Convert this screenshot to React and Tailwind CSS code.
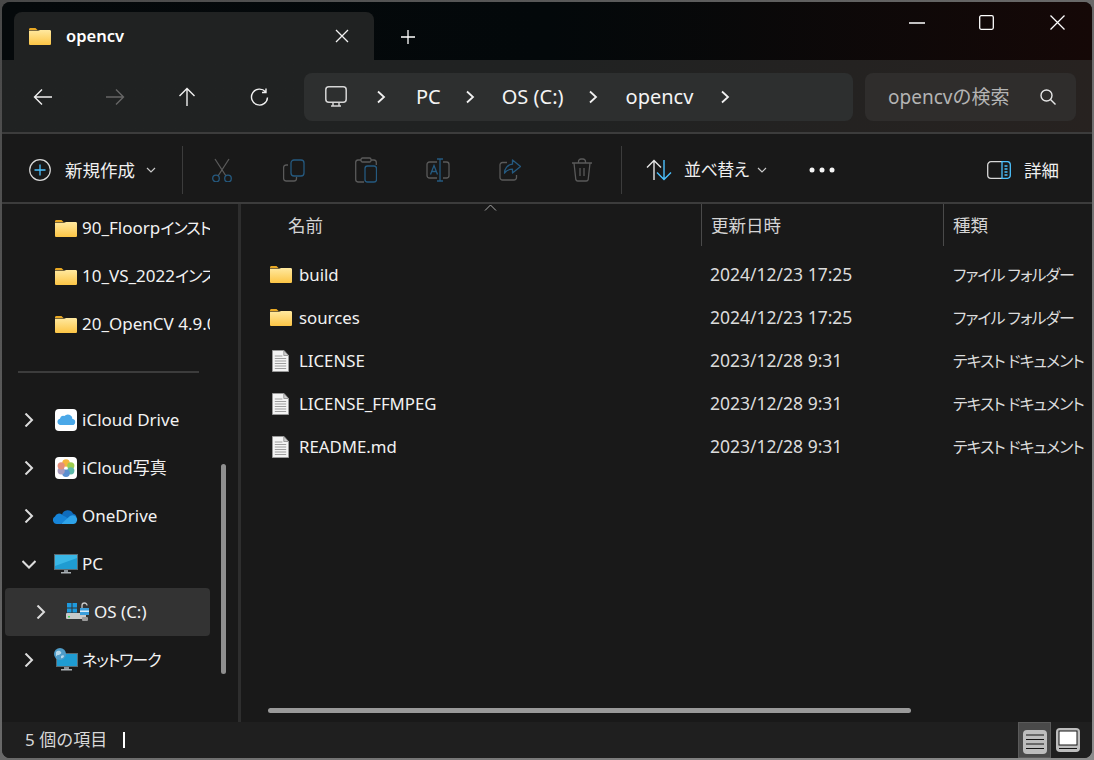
import React from "react";

const font = "font-['Noto_Sans','Noto_Sans_CJK_JP',sans-serif]";
const palt = "[font-feature-settings:'palt']";

const Folder = () => (
  <svg width="22" height="17" viewBox="0 0 23 18" preserveAspectRatio="none" className="shrink-0">
    <defs>
      <linearGradient id="fg" x1="0" y1="0" x2="0" y2="1">
        <stop offset="0" stopColor="#ffe9a0" />
        <stop offset="1" stopColor="#fcc545" />
      </linearGradient>
    </defs>
    <path d="M0 1.500C0 .7.600 0 1.400 0h5.400l2.400 2.400H0z" fill="#e8a824" />
    <path d="M0 3h9.300l2.400-1H21.600c.8 0 1.400.6 1.400 1.400V16.600c0 .8-.6 1.400-1.400 1.400H1.400C.6 18 0 17.400 0 16.600z" fill="url(#fg)" />
  </svg>
);

const Doc = () => (
  <svg width="17" height="22" viewBox="0 0 18 22" preserveAspectRatio="none" className="shrink-0 ml-[2px]">
    <path d="M.5.5h12l5 5v16H.5z" fill="#f4f4f4" stroke="#9a9a9a" />
    <path d="M12.500.5v5h5z" fill="#d0d0d0" stroke="#9a9a9a" />
    <path d="M3 6h8M3 8.500h12M3 11h12M3 13.500h12M3 16h12M3 18.500h12" stroke="#9c9c9c" />
  </svg>
);

const Chevron = ({ down }) => (
  <svg width="14" height="14" viewBox="0 0 14 14" fill="none" stroke="#dcdcdc" strokeWidth="2" className="shrink-0">
    <path d={down ? "M.5 4L7 10.500 13.500 4" : "M3.500.5L10 7l-6.500 6.500"} />
  </svg>
);

const ICloud = () => (
  <svg width="22" height="22" viewBox="0 0 22 22">
    <rect width="22" height="22" rx="4" fill="#fff" />
    <path d="M5.500 16a3.200 3.200 0 01-.6-6.300 3.600 3.600 0 014.500-2.600A4.600 4.600 0 0117.400 10a3 3 0 01-.4 6z" fill="#4aa8e8" />
  </svg>
);

const Photos = () => (
  <svg width="22" height="22" viewBox="0 0 22 22">
    <rect width="22" height="22" rx="4" fill="#fff" />
    <circle cx="11" cy="6" r="3.800" fill="#f5b53d" />
    <circle cx="15.800" cy="8.800" r="3.600" fill="#9ccc4e" />
    <circle cx="15.800" cy="13.800" r="3.600" fill="#5cb8a8" />
    <circle cx="11" cy="16.300" r="3.800" fill="#5a8fd0" />
    <circle cx="6.200" cy="13.800" r="3.600" fill="#a89cc0" />
    <circle cx="6.200" cy="8.800" r="3.600" fill="#e58f7a" />
  </svg>
);

const OneDrive = () => (
  <svg width="25" height="16" viewBox="0 0 25 16">
    <path d="M9 6.500A6 6 0 0120 5.500c1.500.3 3 1.500 3.500 3L14 11z" fill="#0f6cbd" />
    <path d="M2 8.500A4.500 4.500 0 019 6.500L16 11l-8 5H4a4 4 0 01-2-7.500z" fill="#1684d8" />
    <path d="M8 16l9-8c3-1.500 6-.5 7 2.500.5 2.500-1 5.500-3.500 5.500z" fill="#2ea3ea" />
  </svg>
);

const Monitor = () => (
  <svg width="24" height="20" viewBox="0 0 24 20">
    <rect x=".5" y=".5" width="23" height="15" fill="#1f9cd2" stroke="#5a6a72" />
    <path d="M1 1h22v3L1 12z" fill="#3ab7e6" />
    <rect x="10" y="16" width="4" height="2" fill="#8a9298" />
    <rect x="7" y="18" width="10" height="1.500" fill="#aab0b4" />
  </svg>
);

const Drive = () => (
  <svg width="24" height="20" viewBox="0 0 24 20">
    <rect x="1" y="1" width="4.500" height="4.500" fill="#1e9be0" />
    <rect x="6.500" y="1" width="4.500" height="4.500" fill="#1e9be0" />
    <rect x="1" y="6.500" width="4.500" height="4" fill="#1e9be0" />
    <rect x="6.500" y="6.500" width="4.500" height="4" fill="#1e9be0" />
    <rect x="0" y="11" width="20" height="6" rx="1" fill="#c9c9c9" />
    <rect x="2" y="14" width="2" height="1.500" fill="#3fd45a" />
    <path d="M16 6V3.500a2.500 2.500 0 015 0" stroke="#c8c8c8" strokeWidth="1.300" fill="none" />
    <rect x="14" y="6" width="9" height="7" fill="#3a9edc" />
    <rect x="14" y="8.500" width="9" height="1.500" fill="#d8ecf8" />
    <rect x="16" y="15" width="6" height="4" rx="1" fill="#9a9a9a" />
  </svg>
);

const Network = () => (
  <svg width="25" height="24" viewBox="0 0 25 24">
    <rect x="3.500" y="5.500" width="21" height="13" fill="#1f9cd2" stroke="#5a6a72" />
    <rect x="11" y="19" width="5" height="2" fill="#8a9298" />
    <rect x="8" y="21" width="11" height="1.500" fill="#aab0b4" />
    <circle cx="7" cy="6" r="6" fill="#4f9cc8" />
    <path d="M3 4c2-2 4-1 5 0s-1 3-3 3-1 2-2 1zM8 8c1-1 3-1 3 0s-2 3-3 2z" fill="#b5d8ea" />
  </svg>
);

const Kana = ({ children }) => (
  <span className="text-[16px] tracking-[-1px]">{children}</span>
);

const NavRow = ({ icon, label, chevron, down, selected, indent }) => (
  <div
    className={`h-12 ml-[3px] w-[205px] flex items-center overflow-hidden rounded-sm ${selected ? "bg-[#333333]" : ""} ${indent ? "pl-[29px]" : "pl-[17px]"}`}
  >
    <span className="w-[14px] shrink-0 flex justify-center">
      {chevron && <Chevron down={down} />}
    </span>
    <span className="w-[25px] ml-[17px] shrink-0 flex justify-center">{icon}</span>
    <span className={`ml-[4px] text-[17px] text-[#f2f2f2] whitespace-nowrap ${palt}`}>{label}</span>
  </div>
);

const FileRow = ({ icon, name, date, type }) => (
  <div className="h-[43px] flex items-center text-[#f2f2f2] whitespace-nowrap">
    <span className="w-[58px] pl-[29px] flex shrink-0">{icon}</span>
    <span className="w-[411px] shrink-0 text-[16.8px]">{name}</span>
    <span className="w-[243px] shrink-0 text-[#dcdcdc] text-[17.5px]">{date}</span>
    <span className={`text-[#dcdcdc] text-[16px] tracking-[-1px] ${palt}`}>{type}</span>
  </div>
);

const Tool = ({ children }) => (
  <div className="w-[72px] h-full flex items-center justify-center shrink-0">{children}</div>
);

const BreadArrow = () => (
  <svg width="12" height="14" viewBox="0 0 12 14" fill="none" stroke="#f0f0f0" strokeWidth="1.800" className="shrink-0">
    <path d="M3 1.500L9 7l-6 5.500" />
  </svg>
);

const SmallDown = () => (
  <svg width="10" height="7" viewBox="0 0 10 7" fill="none" stroke="#c8c8c8" strokeWidth="1.200">
    <path d="M1 1l4 4 4-4" />
  </svg>
);

export default function App() {
  return (
    <div className={`w-[1094px] h-[760px] overflow-hidden bg-gradient-to-br from-[#484848] to-[#8c8c8c] p-[2px] ${font}`}>
      <div className="w-[1090px] h-[756px] rounded-lg overflow-hidden flex flex-col bg-[#191919]">
        {/* タイトルバー */}
        <div className="h-[58px] shrink-0 flex bg-gradient-to-r from-[#05090b] via-[#03080a] to-[#150807]">
          <div className="ml-[12px] mt-[10px] w-[360px] h-[48px] bg-[#202222] rounded-t-lg flex items-center pl-[15px] shrink-0">
            <Folder />
            <span className="ml-[15px] text-[16.5px] font-semibold text-white">opencv</span>
            <svg width="14" height="14" viewBox="0 0 14 14" stroke="#f2f2f2" strokeWidth="1.300" className="ml-[211px]">
              <path d="M1 1l12 12M13 1L1 13" />
            </svg>
          </div>
          <svg width="16" height="16" viewBox="0 0 16 16" stroke="#fff" strokeWidth="1.300" className="ml-[26px] mt-[27px] shrink-0">
            <path d="M8 1v14M1 8h14" />
          </svg>
          <div className="ml-auto flex h-[30px] items-start">
            <svg width="16" height="2" viewBox="0 0 16 2" stroke="#fff" strokeWidth="1.300" className="mt-[20px]">
              <path d="M0 1h16" />
            </svg>
            <svg width="15" height="15" viewBox="0 0 15 15" fill="none" stroke="#fff" strokeWidth="1.300" className="ml-[54px] mt-[13px]">
              <rect x=".7" y=".7" width="13.600" height="13.600" rx="1.500" />
            </svg>
            <svg width="15" height="15" viewBox="0 0 15 15" stroke="#fff" strokeWidth="1.300" className="ml-[56px] mt-[13px] mr-[27px]">
              <path d="M.5.5l14 14M14.500.5l-14 14" />
            </svg>
          </div>
        </div>

        {/* アドレスバー */}
        <div className="h-[72px] shrink-0 flex items-center pl-[5px] pt-[2px] bg-gradient-to-r from-[#202222] via-[#202222] to-[#272220]">
          <Tool>
            <svg width="20" height="18" viewBox="0 0 20 18" fill="none" stroke="#f0f0f0" strokeWidth="1.400"><path d="M19 9H1.500M9 1.500L1.500 9 9 16.500" /></svg>
          </Tool>
          <Tool>
            <svg width="20" height="18" viewBox="0 0 20 18" fill="none" stroke="#666666" strokeWidth="1.400"><path d="M1 9h17.500M11 1.500L18.500 9 11 16.500" /></svg>
          </Tool>
          <Tool>
            <svg width="18" height="20" viewBox="0 0 18 20" fill="none" stroke="#f0f0f0" strokeWidth="1.400"><path d="M9 19V1.500M1.500 9L9 1.500 16.500 9" /></svg>
          </Tool>
          <Tool>
            <svg width="19" height="19" viewBox="0 0 19 19" fill="none" stroke="#f0f0f0" strokeWidth="1.400"><path d="M15.500 3.800A8 8 0 1017.500 9.500M16 .5v4h-4" /></svg>
          </Tool>
          <div className="ml-[9px] w-[549px] h-[48px] rounded-lg bg-[#2d2f2f] flex items-center pl-[21px] text-[20px] text-[#f4f4f4] shrink-0 whitespace-nowrap">
            <svg width="22" height="22" viewBox="0 0 22 22" fill="none" stroke="#d6d6d6" strokeWidth="1.500" className="shrink-0">
              <rect x=".8" y=".8" width="20.400" height="15.400" rx="3" />
              <path d="M8 16.500v3M14 16.500v3M6 20h10" />
            </svg>
            <span className="ml-[28px]"><BreadArrow /></span>
            <span className="ml-[29px]">PC</span>
            <span className="ml-[23px]"><BreadArrow /></span>
            <span className="ml-[26px]">OS (C:)</span>
            <span className="ml-[23px]"><BreadArrow /></span>
            <span className="ml-[27px]">opencv</span>
            <span className="ml-[26px]"><BreadArrow /></span>
          </div>
          <div className="ml-[12px] w-[211px] h-[48px] rounded-lg bg-[#2f2d2c] flex items-center pl-[23px] text-[19px] text-[#b4b4b4] shrink-0 whitespace-nowrap">
            <span>opencvの検索</span>
            <svg width="16" height="16" viewBox="0 0 16 16" fill="none" stroke="#e6e6e6" strokeWidth="1.400" className="ml-auto mr-[20px]">
              <circle cx="6.500" cy="6.500" r="5.500" /><path d="M10.500 10.500L15.500 15.500" />
            </svg>
          </div>
        </div>
        <div className="h-[2px] shrink-0 bg-[#3c3c3c]" />

        {/* コマンドバー */}
        <div className="h-[68px] shrink-0 flex items-center pt-[4px] text-[#f0f0f0]">
          <svg width="22" height="22" viewBox="0 0 22 22" fill="none" className="ml-[27px] shrink-0">
            <circle cx="11" cy="11" r="10.300" stroke="#d8d8d8" strokeWidth="1.200" />
            <path d="M11 5.500v11M5.500 11h11" stroke="#4cc2ff" strokeWidth="1.300" />
          </svg>
          <span className="ml-[14px] w-[71px] shrink-0 text-[17.5px] whitespace-nowrap">新規作成</span>
          <span className="ml-[10px]"><SmallDown /></span>
          <div className="ml-[26px] w-[1px] h-[48px] bg-[#3c3c3c] shrink-0" />
          <div className="h-full flex items-center ml-[3px]">
            <Tool>
              <svg width="22" height="24" viewBox="0 0 22 24" fill="none" strokeWidth="1.300">
                <path d="M4 1l11 17M18 1L7 18" stroke="#5a5a5a" />
                <circle cx="5" cy="20.500" r="3.300" stroke="#255a80" />
                <circle cx="17" cy="20.500" r="3.300" stroke="#255a80" />
              </svg>
            </Tool>
            <Tool>
              <svg width="22" height="23" viewBox="0 0 22 23" fill="none" strokeWidth="1.300">
                <path d="M5 6H3a2.500 2.500 0 00-2.400 2.500V19.500A2.500 2.500 0 003 22h8a2.500 2.500 0 002.500-2.500V18" stroke="#5a5a5a" />
                <rect x="8" y="1" width="13" height="16" rx="3" stroke="#255a80" />
              </svg>
            </Tool>
            <Tool>
              <svg width="22" height="26" viewBox="0 0 22 26" fill="none" strokeWidth="1.300">
                <path d="M6 3H3A2.500 2.500 0 00.7 5.500v17A2.500 2.500 0 003 25h6M16 3h3a2.500 2.500 0 012.300 2.500V8" stroke="#5a5a5a" />
                <rect x="6" y="1" width="10" height="4" rx="1.500" stroke="#5a5a5a" />
                <rect x="10" y="9" width="11.500" height="16" rx="2.500" stroke="#255a80" />
              </svg>
            </Tool>
            <Tool>
              <svg width="24" height="24" viewBox="0 0 24 24" fill="none" strokeWidth="1.300">
                <path d="M11 4H3.500A2.500 2.500 0 001 6.500v11A2.500 2.500 0 003.500 20H11M17 4h3.500A2.500 2.500 0 0123 6.500v11a2.500 2.500 0 01-2.500 2.500H17" stroke="#5a5a5a" />
                <path d="M14 1v22M11 1h6M11 23h6M4.500 16.500L8 7.500l3.500 9M6 13.500h4" stroke="#255a80" />
              </svg>
            </Tool>
            <Tool>
              <svg width="22" height="22" viewBox="0 0 22 22" fill="none" strokeWidth="1.300">
                <path d="M8 3.500H3.500A2.500 2.500 0 001 6v12.500A2.500 2.500 0 003.500 21H15a2.500 2.500 0 002.500-2.500V16" stroke="#5a5a5a" />
                <path d="M13.500 1l8 6.500-8 6.500v-3.800c-3.500 0-6 1-8 4 0-4.500 3-8.500 8-9z" stroke="#255a80" strokeLinejoin="round" />
              </svg>
            </Tool>
            <Tool>
              <svg width="22" height="24" viewBox="0 0 22 24" fill="none" stroke="#5a5a5a" strokeWidth="1.300">
                <path d="M1 5h20M7.500 5V3.500A2.500 2.500 0 0110 1h2a2.500 2.500 0 012.500 2.500V5M3 5l1.800 16.500A2 2 0 006.800 23h8.400a2 2 0 002-1.500L19 5M9 10v8M13 10v8" />
              </svg>
            </Tool>
          </div>
          <div className="ml-[3px] w-[1px] h-[48px] bg-[#3c3c3c] shrink-0" />
          <svg width="26" height="22" viewBox="0 0 26 22" fill="none" strokeWidth="1.400" className="ml-[24px] shrink-0">
            <path d="M8 21V1.500M1 8.500l7-7 7 7" stroke="#e6e6e6" />
            <path d="M18 1v19.500M11 13.500l7 7 7-7" stroke="#4cc2ff" />
          </svg>
          <span className={`ml-[12px] w-[64px] shrink-0 text-[17px] tracking-[-0.5px] whitespace-nowrap ${palt}`}>並べ替え</span>
          <span className="ml-[9px]"><SmallDown /></span>
          <svg width="26" height="6" viewBox="0 0 26 6" fill="#f4f4f4" className="ml-[42px] shrink-0">
            <circle cx="3" cy="3" r="2.500" /><circle cx="13" cy="3" r="2.500" /><circle cx="23" cy="3" r="2.500" />
          </svg>
          <svg width="24" height="18" viewBox="0 0 24 18" fill="none" strokeWidth="1.300" className="ml-[152px] shrink-0">
            <path d="M15 .7H4A3.300 3.300 0 00.7 4v10A3.300 3.300 0 004 17.300h11" stroke="#d8d8d8" />
            <path d="M15 .7h5.500A3 3 0 0123.300 3.700v10.600a3 3 0 01-2.800 3H15z" stroke="#4cc2ff" />
            <path d="M17.500 5h3M17.500 8h3M17.500 11h3M17.500 14h3" stroke="#4cc2ff" />
          </svg>
          <span className="ml-[13px] text-[17.5px] whitespace-nowrap">詳細</span>
        </div>
        <div className="h-[2px] shrink-0 bg-[#3c3c3c]" />

        {/* 本体 */}
        <div className="flex-1 flex min-h-0">
          <div className="relative w-[236px] shrink-0">
            <NavRow icon={<Folder />} label={<span className="block w-[128px] overflow-hidden">90_Floorp<Kana>インストール</Kana></span>} />
            <NavRow icon={<Folder />} label={<span className="block w-[128px] overflow-hidden">10_VS_2022<Kana>インストール</Kana></span>} />
            <NavRow icon={<Folder />} label={<span className="block w-[128px] overflow-hidden">20_OpenCV 4.9.0</span>} />
            <div className="h-12 flex items-center pl-[16px]">
              <div className="w-[181px] h-[2px] bg-[#3c3c3c]" />
            </div>
            <NavRow chevron icon={<ICloud />} label="iCloud Drive" />
            <NavRow chevron icon={<Photos />} label="iCloud写真" />
            <NavRow chevron icon={<OneDrive />} label="OneDrive" />
            <NavRow chevron down icon={<Monitor />} label="PC" />
            <NavRow chevron selected indent icon={<Drive />} label="OS (C:)" />
            <NavRow chevron icon={<Network />} label={<Kana>ネットワーク</Kana>} />
            <div className="absolute left-[219px] top-[260px] w-[5px] h-[210px] rounded-full bg-[#8f8f8f]" />
          </div>
          <div className="w-[3px] shrink-0 bg-[#2e2e2e]" />
          <div className="relative flex-1 min-w-0 overflow-hidden">
            <div className="h-[49px] flex items-start text-[17.5px] text-[#d4d4d4] whitespace-nowrap">
              <span className="w-[460px] pl-[47px] h-[42px] flex items-center shrink-0">名前</span>
              <span className="w-[242px] pl-[9px] h-[42px] flex items-center border-l border-[#4a4a4a] shrink-0">更新日時</span>
              <span className="pl-[9px] h-[42px] flex items-center border-l border-[#4a4a4a]">種類</span>
            </div>
            <svg width="13" height="7" viewBox="0 0 13 7" fill="none" stroke="#a8a8a8" className="absolute left-[243px] top-0">
              <path d="M1 6.500L6.500 1 12 6.500" />
            </svg>
            <FileRow icon={<Folder />} name="build" date="2024/12/23 17:25" type="ファイル フォルダー" />
            <FileRow icon={<Folder />} name="sources" date="2024/12/23 17:25" type="ファイル フォルダー" />
            <FileRow icon={<Doc />} name="LICENSE" date="2023/12/28 9:31" type="テキスト ドキュメント" />
            <FileRow icon={<Doc />} name="LICENSE_FFMPEG" date="2023/12/28 9:31" type="テキスト ドキュメント" />
            <FileRow icon={<Doc />} name="README.md" date="2023/12/28 9:31" type="テキスト ドキュメント" />
            <div className="absolute left-[27px] top-[504px] w-[643px] h-[5px] rounded-full bg-[#9a9a9a]" />
          </div>
        </div>

        {/* ステータスバー */}
        <div className="h-[36px] shrink-0 flex items-center bg-[#1f1f1f] text-[#d8d8d8] text-[17px]">
          <span className="ml-[23px] whitespace-nowrap">5 個の項目</span>
          <div className="ml-[16px] w-[2px] h-[16px] bg-white" />
          <div className="ml-auto flex items-center h-full mr-[12px]">
            <div className="w-[33px] h-full bg-[#4a4a4a] border border-[#5a5a5a] flex items-center justify-center pt-[4px]">
              <svg width="24" height="24" viewBox="0 0 24 24">
                <rect width="24" height="24" rx="4" fill="#bdbdbd" />
                <path d="M3 5h18M3 9.500h18M3 14h18M3 18.500h18" stroke="#151515" strokeWidth="1.200" />
              </svg>
            </div>
            <div className="ml-[5px] w-[24px] flex justify-center">
              <svg width="24" height="24" viewBox="0 0 24 24">
                <rect width="24" height="24" rx="4" fill="#bdbdbd" />
                <rect x="3" y="3" width="18" height="14" fill="#fff" stroke="#151515" />
                <path d="M3 20.500h18" stroke="#151515" />
              </svg>
            </div>
          </div>
        </div>
      </div>
    </div>
  );
}
